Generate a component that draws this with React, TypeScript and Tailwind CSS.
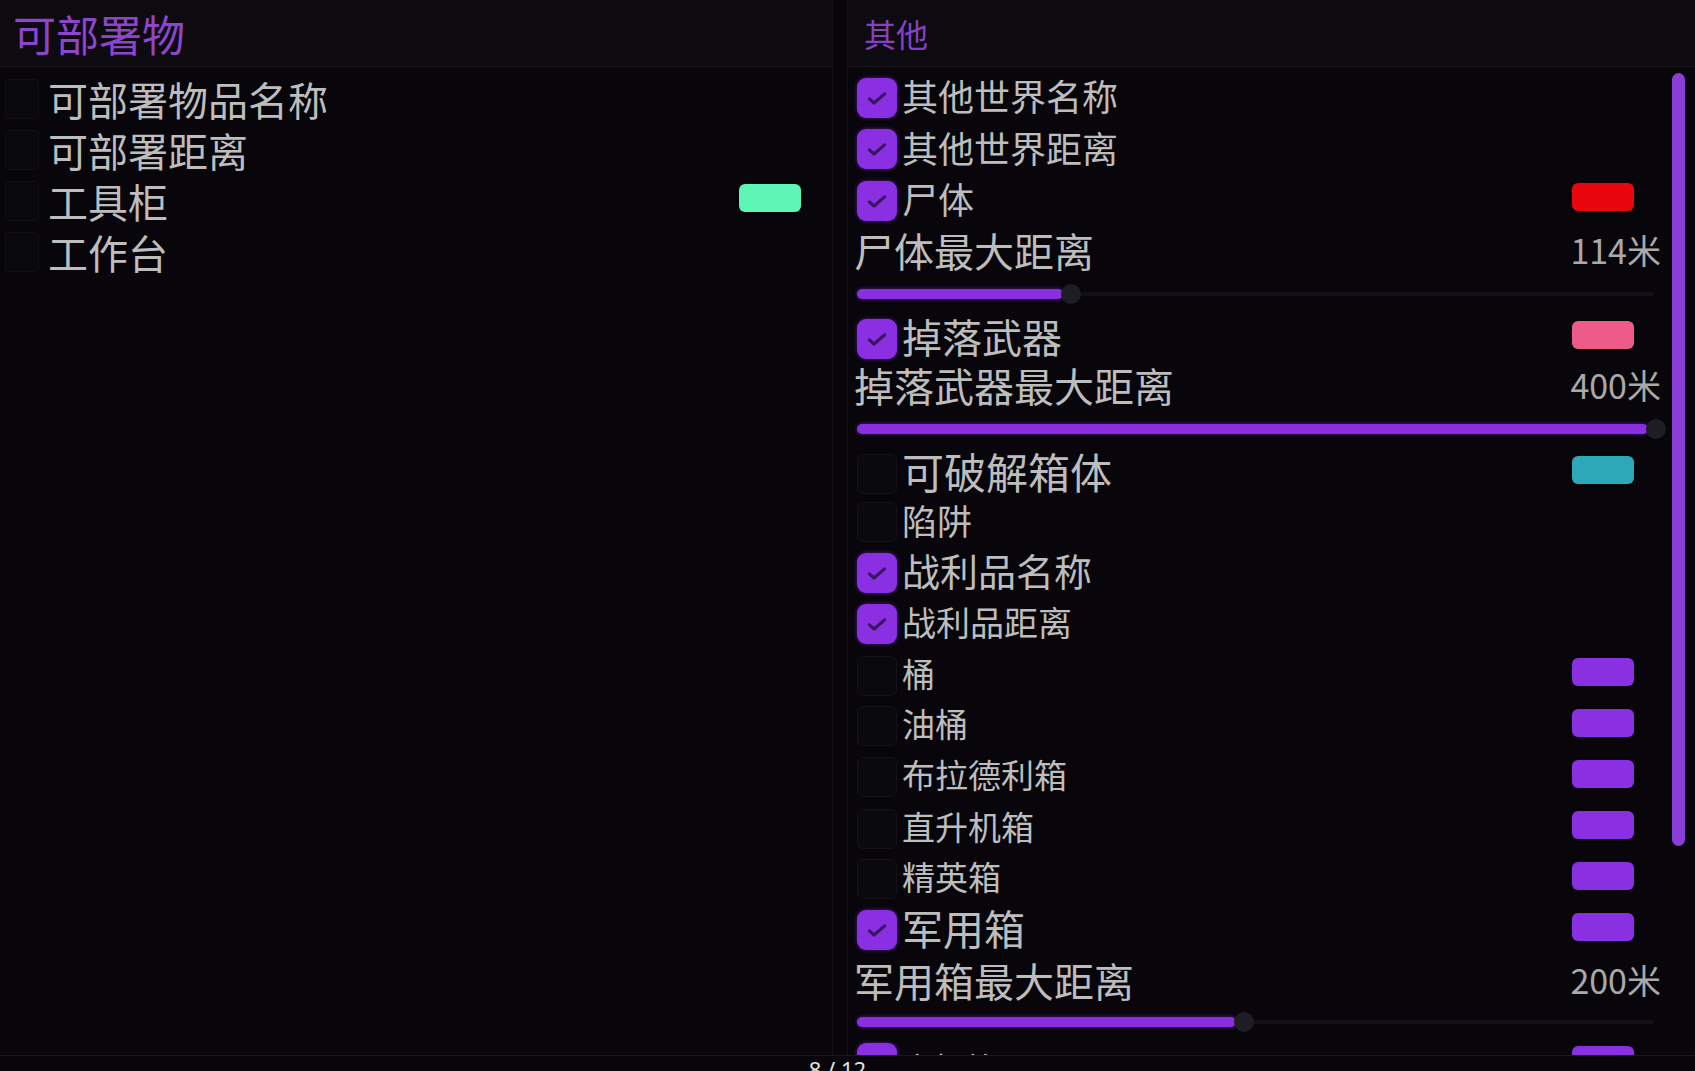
import React from "react";

const FONT = '"Noto Sans CJK SC", "Noto Sans", sans-serif';
const PURPLE = "bg-[#8b2fe3]";

type CheckRow = {
  kind: "check";
  label: string;
  checked: boolean;
  text: string;
  h: string;
  swatch?: string;
  shift?: string;
};
type LabelRow = { kind: "label"; label: string; value: string; text: string; h: string };
type SliderRow = { kind: "slider"; pct: number; h: string };
type Row = CheckRow | LabelRow | SliderRow;

const leftRows: { label: string; swatch?: string }[] = [
  { label: "可部署物品名称" },
  { label: "可部署距离" },
  { label: "工具柜", swatch: "bg-[#5ef6b6]" },
  { label: "工作台" },
];

const rightRows: Row[] = [
  { kind: "check", label: "其他世界名称", checked: true, text: "text-[36px]", h: "h-[51px]" },
  { kind: "check", label: "其他世界距离", checked: true, text: "text-[36px]", h: "h-[52px]" },
  { kind: "check", label: "尸体", checked: true, text: "text-[36px]", h: "h-[51px]", swatch: "bg-[#e8070c]" },
  { kind: "label", label: "尸体最大距离", value: "114米", text: "text-[40px]", h: "h-[47px]" },
  { kind: "slider", pct: 25.8, h: "h-[42px]" },
  { kind: "check", label: "掉落武器", checked: true, text: "text-[40px]", h: "h-[47px]", swatch: "bg-[#ee5b88]" },
  { kind: "label", label: "掉落武器最大距离", value: "400米", text: "text-[40px]", h: "h-[46px]" },
  { kind: "slider", pct: 99.2, h: "h-[42px]" },
  { kind: "check", label: "可破解箱体", checked: false, text: "text-[42px]", h: "h-[47px]", swatch: "bg-[#2ca8b9]" },
  { kind: "check", label: "陷阱", checked: false, text: "text-[35px]", h: "h-[50px]" },
  { kind: "check", label: "战利品名称", checked: true, text: "text-[38px]", h: "h-[51px]" },
  { kind: "check", label: "战利品距离", checked: true, text: "text-[34px]", h: "h-[52px]" },
  { kind: "check", label: "桶", checked: false, text: "text-[33px]", h: "h-[51px]", swatch: PURPLE },
  { kind: "check", label: "油桶", checked: false, text: "text-[33px]", h: "h-[50px]", swatch: PURPLE },
  { kind: "check", label: "布拉德利箱", checked: false, text: "text-[33px]", h: "h-[52px]", swatch: PURPLE },
  { kind: "check", label: "直升机箱", checked: false, text: "text-[33px]", h: "h-[51px]", swatch: PURPLE },
  { kind: "check", label: "精英箱", checked: false, text: "text-[33px]", h: "h-[50px]", swatch: PURPLE },
  { kind: "check", label: "军用箱", checked: true, text: "text-[41px]", h: "h-[52px]", swatch: PURPLE },
  { kind: "label", label: "军用箱最大距离", value: "200米", text: "text-[40px]", h: "h-[47px]" },
  { kind: "slider", pct: 47.6, h: "h-[38px]" },
  { kind: "check", label: "空投箱", checked: true, text: "text-[32px]", h: "h-[44px]", swatch: PURPLE, shift: "mt-[8px]" },
];

function Tick() {
  return (
    <svg width="26" height="26" viewBox="0 0 24 24" fill="none">
      <path d="M5 12.8l4.3 3.9L19 8.2" stroke="#3a1562" strokeWidth="3" strokeLinecap="round" strokeLinejoin="round" />
    </svg>
  );
}

function CheckBox({ checked }: { checked: boolean }) {
  if (checked) {
    return (
      <div className="w-[40px] h-[40px] shrink-0 rounded-[9px] bg-[#8b2fe3] shadow-[0_0_4px_#4a1a80] flex items-center justify-center">
        <Tick />
      </div>
    );
  }
  return <div className="w-[40px] h-[40px] shrink-0 rounded-[6px] bg-[#0a090d] border border-[#141217]" />;
}

function Swatch({ color }: { color: string }) {
  return <div className={`w-[62px] h-[28px] rounded-[6px] shrink-0 shadow-[0_0_3px_#00000080] ${color}`} />;
}

function Slider({ pct }: { pct: number }) {
  return (
    <div className="relative w-[797px] h-[10px]">
      <div className="absolute left-0 right-0 top-[3px] h-[4px] rounded-full bg-[#121016]" />
      <div
        className="absolute left-0 top-0 h-[10px] rounded-full bg-[#8a2fe0] shadow-[0_0_4px_#4b1c85]"
        style={{ width: `${pct}%` }}
      />
      <div
        className="absolute top-[-5px] w-[20px] h-[20px] rounded-full bg-[#1f1d24]"
        style={{ left: `calc(${pct}% - 2px)` }}
      />
    </div>
  );
}

function RightRow({ row }: { row: Row }) {
  if (row.kind === "slider") {
    return (
      <div className={`${row.h} shrink-0 flex items-center`}>
        <Slider pct={row.pct} />
      </div>
    );
  }
  if (row.kind === "label") {
    return (
      <div className={`${row.h} shrink-0 flex items-center justify-between pr-[11px]`}>
        <span className={`${row.text} leading-none text-[#bdbdbd] -ml-[3px]`}>{row.label}</span>
        <span className="text-[34px] leading-none text-[#a9a9a9]">{row.value}</span>
      </div>
    );
  }
  return (
    <div className={`${row.h} shrink-0 flex items-center pr-[38px]`}>
      <CheckBox checked={row.checked} />
      <span className={`${row.text} ${row.shift ?? "mb-[5px]"} leading-none text-[#bdbdbd] ml-[5px] flex-1`}>
        {row.label}
      </span>
      {row.swatch && (
        <div className="mb-[7px]">
          <Swatch color={row.swatch} />
        </div>
      )}
    </div>
  );
}

export default function App() {
  return (
    <div
      className="w-[1695px] h-[1071px] bg-[#08060b] overflow-hidden flex flex-col"
      style={{ fontFamily: FONT }}
    >
      <div className="h-[1055px] shrink-0 flex overflow-hidden">
        {/* deployables panel */}
        <div className="w-[833px] shrink-0 flex flex-col border-r border-[#111014]">
          <div className="h-[67px] shrink-0 bg-[#0d0b10] border-b border-[#19171d] flex items-center pl-[13px]">
            <span className="text-[43px] leading-none text-[#8d46cb]">可部署物</span>
          </div>
          <div className="mt-[6px] flex flex-col">
            {leftRows.map((r) => (
              <div key={r.label} className="h-[51px] shrink-0 flex items-center pr-[31px]">
                <div className="ml-[5px] w-[34px] h-[40px] shrink-0 rounded-[4px] bg-[#09080c] border border-[#121015]" />
                <span className="ml-[9px] flex-1 text-[40px] leading-none text-[#bdbdbd]">{r.label}</span>
                {r.swatch && (
                  <div className="mb-[6px]">
                    <Swatch color={r.swatch} />
                  </div>
                )}
              </div>
            ))}
          </div>
        </div>

        {/* other panel */}
        <div className="ml-[14px] flex-1 flex flex-col border-l border-[#111014]">
          <div className="h-[67px] shrink-0 bg-[#0d0b10] border-b border-[#19171d] flex items-center pl-[16px]">
            <span className="text-[32px] leading-none text-[#8442c2]">其他</span>
          </div>
          <div className="flex flex-1 min-h-0">
            <div className="w-[824px] pl-[9px] pt-[5px] flex flex-col overflow-hidden">
              {rightRows.map((r, i) => (
                <RightRow key={i} row={r} />
              ))}
            </div>
            <div className="mt-[6px] w-[13px] h-[773px] rounded-full bg-[#8b3dd8]" />
          </div>
        </div>
      </div>

      {/* page indicator */}
      <div className="h-[16px] shrink-0 border-t border-[#1b191f] flex justify-center pr-[20px] overflow-hidden">
        <span className="pt-[2px] text-[22px] leading-[22px] text-[#e2e2e2]" style={{ fontFamily: '"Noto Sans", sans-serif' }}>
          8 / 12
        </span>
      </div>
    </div>
  );
}
